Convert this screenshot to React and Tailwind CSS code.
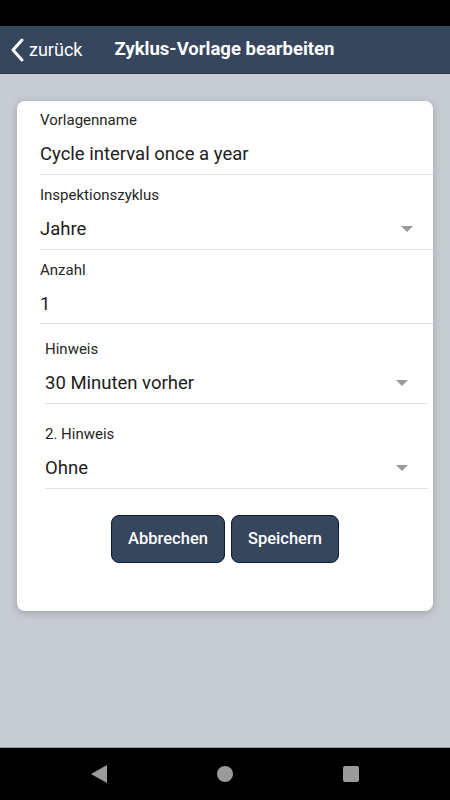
import React from "react";

function Arrow() {
  return (
    <svg width="12" height="6" viewBox="0 0 12 6" className="shrink-0">
      <polygon points="0,0 12,0 6,6" fill="#9a9a9a" />
    </svg>
  );
}

function Field({ label, value, select, pt, pb }) {
  return (
    <div className={`ml-[23px] border-b border-[#e2e2e2] ${pt} ${pb}`}>
      <div className="text-[15px] leading-[16px] text-[#262626]">{label}</div>
      <div className="mt-[14px] flex h-[24px] items-center justify-between pr-[20px]">
        <span className="text-[18.5px] leading-[24px] text-[#1c1c1c]">{value}</span>
        {select && <Arrow />}
      </div>
    </div>
  );
}

function Hint({ label, value, topPad }) {
  return (
    <div className={`mr-[5px] ml-[28px] border-b border-[#e2e2e2] ${topPad} pb-[8px]`}>
      <div className="text-[15px] leading-[16px] text-[#262626]">{label}</div>
      <div className="mt-[14px] flex h-[24px] items-center justify-between pr-[20px]">
        <span className="text-[18.5px] leading-[24px] text-[#1c1c1c]">{value}</span>
        <Arrow />
      </div>
    </div>
  );
}

export default function App() {
  return (
    <div className="flex h-[800px] w-[450px] flex-col bg-[#c7cbd2]" style={{ fontFamily: "Roboto, 'Noto Sans', sans-serif" }}>
      <div className="h-[26px] bg-black" />
      <div className="flex h-[48px] items-center bg-[#36465d] border-b border-[#2a3444] text-white">
        <div className="ml-[10px] flex items-center">
          <svg width="14" height="24" viewBox="0 0 14 24">
            <polyline points="12,2 3,12 12,22" fill="none" stroke="white" strokeWidth="3" strokeLinecap="round" strokeLinejoin="round" />
          </svg>
          <span className="ml-[5px] text-[18px]">zurück</span>
        </div>
        <span className="ml-[32px] text-[18.5px] font-bold">Zyklus-Vorlage bearbeiten</span>
      </div>
      <div className="flex-1 px-[17px] pt-[27px]">
        <div className="h-[510px] rounded-[8px] bg-white shadow-[0_2px_8px_rgba(0,0,0,0.2)]">
          <Field pt="pt-[11px]" pb="pb-[8px]" label="Vorlagenname" value="Cycle interval once a year" />
          <Field pt="pt-[12px]" pb="pb-[8px]" label="Inspektionszyklus" value="Jahre" select />
          <Field pt="pt-[12px]" pb="pb-[7px]" label="Anzahl" value="1" />
          <Hint topPad="pt-[17px]" label="Hinweis" value="30 Minuten vorher" />
          <Hint topPad="pt-[22px]" label="2. Hinweis" value="Ohne" />
          <div className="mt-[26px] flex justify-center gap-[6px]">
            <button className="h-[48px] w-[114px] rounded-[8px] border border-[#0d1b33] bg-[#36465d] text-[16.5px] font-medium text-white">Abbrechen</button>
            <button className="h-[48px] w-[108px] rounded-[8px] border border-[#0d1b33] bg-[#36465d] text-[16.5px] font-medium text-white">Speichern</button>
          </div>
        </div>
      </div>
      <div className="flex h-[53px] items-center justify-center gap-[110px] border-t border-[#999] bg-black">
        <svg width="16" height="18" viewBox="0 0 16 18"><polygon points="16,0 16,18 0,9" fill="#9b9b9b" /></svg>
        <div className="h-[16px] w-[16px] rounded-full bg-[#9b9b9b]" />
        <div className="h-[16px] w-[16px] rounded-[2px] bg-[#9b9b9b]" />
      </div>
    </div>
  );
}
